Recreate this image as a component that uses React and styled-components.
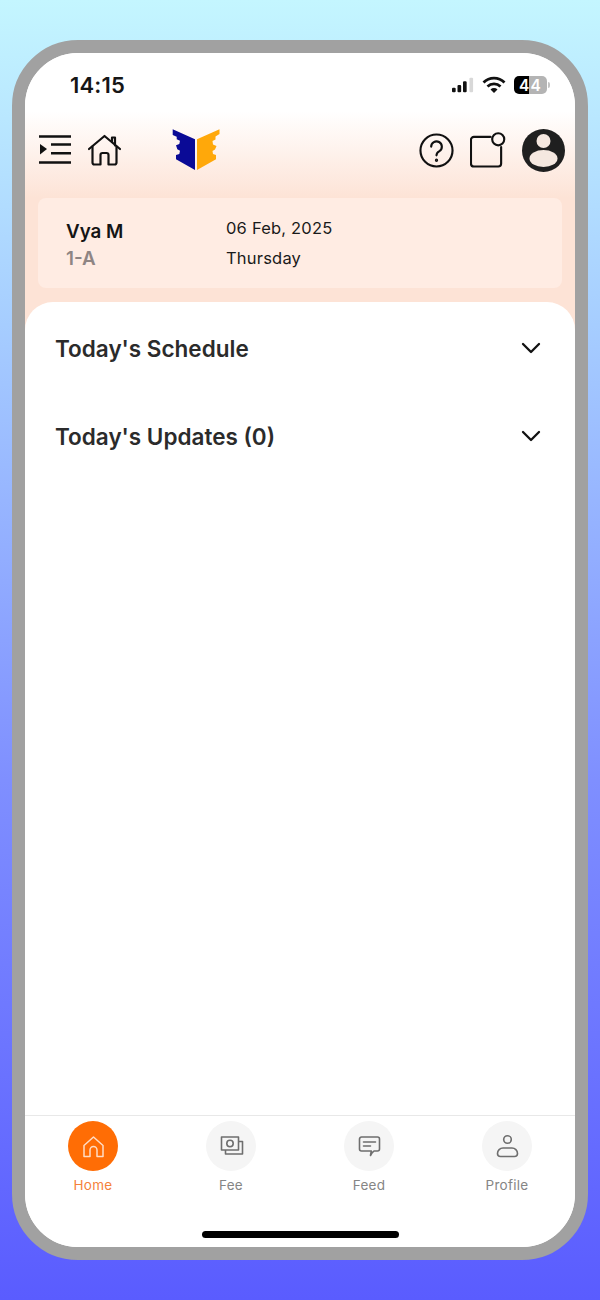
import React from 'react';
import styled, { createGlobalStyle } from 'styled-components';

const GlobalStyle = createGlobalStyle`
  html, body {
    margin: 0;
    padding: 0;
  }
  body {
    font-family: Inter, "Liberation Sans", sans-serif;
  }
`;

// Fond de la page et cadre du telephone
const Page = styled.div`
  box-sizing: border-box;
  width: 600px;
  height: 1300px;
  padding: 40px 12px;
  background: linear-gradient(180deg, #c4f6ff 0%, #a6cdff 25%, #7f8fff 60%, #5a5cff 100%);
`;

const Phone = styled.div`
  box-sizing: border-box;
  height: 1220px;
  border: 13px solid #a1a1a1;
  border-radius: 66px;
  background: #fff;
  overflow: hidden;
  display: flex;
  flex-direction: column;
`;

const Top = styled.div`
  background: linear-gradient(180deg, #ffffff 0, #ffffff 58px, #fde3d6 145px, #fde3d6 100%);
  height: 277px;
  flex-shrink: 0;
  display: flex;
  flex-direction: column;
`;

const StatusBar = styled.div`
  height: 62px;
  flex-shrink: 0;
  display: flex;
  align-items: center;
  padding: 2px 25px 0 45px;
  box-sizing: border-box;
`;

const Clock = styled.span`
  font-size: 22px;
  font-weight: 600;
  color: #161616;
  letter-spacing: 0.2px;
  margin-right: auto;
`;

const StatusIcons = styled.div`
  display: flex;
  align-items: center;
  gap: 8px;
`;

const Battery = styled.div`
  width: 33px;
  height: 18px;
  border-radius: 5px;
  background: linear-gradient(90deg, #000 0 44%, #b4b4b4 44% 100%);
  color: #fff;
  font-size: 15.5px;
  font-weight: 600;
  letter-spacing: 1.2px;
  display: flex;
  align-items: center;
  justify-content: center;
  margin-right: 3px;
  position: relative;

  &::after {
    content: '';
    position: absolute;
    right: -3px;
    top: 6px;
    width: 2px;
    height: 6px;
    border-radius: 0 2px 2px 0;
    background: #c4c4c4;
  }
`;

const Header = styled.header`
  height: 70px;
  flex-shrink: 0;
  display: flex;
  align-items: center;
  padding: 0 10px 0 14px;
`;

const LeftIcons = styled.div`
  display: flex;
  align-items: center;
  gap: 17px;
`;

const Logo = styled.svg`
  margin-left: 51px;
  margin-top: -2px;
`;

const RightIcons = styled.div`
  margin-left: auto;
  display: flex;
  align-items: center;
  gap: 16px;
`;

const InfoCard = styled.div`
  margin: 13px 13px 0;
  height: 90px;
  box-sizing: border-box;
  border-radius: 8px;
  background: #ffece3;
  display: flex;
  padding: 19px 0 0 28px;
`;

const NameCol = styled.div`
  width: 160px;
  padding-top: 2px;
  display: flex;
  flex-direction: column;
  gap: 3px;
`;

const Name = styled.div`
  font-size: 18.8px;
  line-height: 26px;
  font-weight: 600;
  color: #141414;
`;

const ClassName = styled.div`
  font-size: 18.8px;
  line-height: 22px;
  font-weight: 600;
  color: #8f8583;
`;

const DateCol = styled.div`
  display: flex;
  flex-direction: column;
  gap: 8px;
`;

const DateLine = styled.div`
  font-size: 16.5px;
  line-height: 22px;
  color: #1a1a1a;
  letter-spacing: 0.2px;
`;

const Sheet = styled.main`
  flex: 1;
  margin-top: -28px;
  background: #fff;
  border-radius: 28px 28px 0 0;
  padding: 26px 34px 0 30px;
  position: relative;
`;

const AccordionRow = styled.div`
  height: 40px;
  margin-bottom: 48px;
  display: flex;
  align-items: center;
  justify-content: space-between;
`;

const AccordionTitle = styled.h2`
  margin: 0;
  font-size: 22.5px;
  font-weight: 600;
  color: #2b2b2b;
`;

const BottomNav = styled.nav`
  height: 132px;
  flex-shrink: 0;
  box-sizing: border-box;
  border-top: 1px solid #e8e8e8;
  background: #fff;
  display: flex;
  flex-direction: column;
  align-items: center;
`;

const Tabs = styled.div`
  width: 100%;
  display: flex;
  justify-content: space-between;
  padding: 5px 18px 0;
  box-sizing: border-box;
`;

const Tab = styled.div`
  width: 100px;
  display: flex;
  flex-direction: column;
  align-items: center;
  gap: 5px;
`;

const TabCircle = styled.div`
  width: 50px;
  height: 50px;
  border-radius: 50%;
  background: ${(props) => (props.$active ? '#ff6d05' : '#f5f5f5')};
  display: flex;
  align-items: center;
  justify-content: center;
`;

const TabLabel = styled.span`
  font-size: 13.5px;
  line-height: 18px;
  letter-spacing: 0.3px;
  color: ${(props) => (props.$active ? '#f5813a' : '#858585')};
`;

const HomeBar = styled.div`
  width: 197px;
  height: 7px;
  border-radius: 4px;
  background: #000;
  margin-top: 37px;
`;

const Chevron = () => (
  <svg width="20" height="12" viewBox="0 0 20 12" fill="none" stroke="#111" strokeWidth="2.3" strokeLinecap="round" strokeLinejoin="round">
    <path d="M2 2l8 8 8-8" />
  </svg>
);

const tabs = [
  {
    label: 'Home',
    active: true,
    icon: (
      <g stroke="#ffdcc4" strokeWidth="1.5" strokeLinejoin="round" strokeLinecap="round" fill="none">
        <path d="M3 11.5L12.5 3 22 11.5V22.500h-6v-6.500a3.400 3.400 0 0 0-7 0V22.500H3z" />
      </g>
    ),
  },
  {
    label: 'Fee',
    icon: (
      <g stroke="#6e6e6e" strokeWidth="1.6" strokeLinejoin="round" fill="none">
        <rect x="2.500" y="3" width="17" height="13" />
        <circle cx="11" cy="9.500" r="3.200" />
        <path d="M19.500 7.500h4V20h-17v-4" />
      </g>
    ),
  },
  {
    label: 'Feed',
    icon: (
      <g stroke="#6e6e6e" strokeWidth="1.6" strokeLinejoin="round" strokeLinecap="round" fill="none">
        <path d="M4.500 3h16a2 2 0 0 1 2 2v10a2 2 0 0 1-2 2h-3.500l-2 1.800-1.500 2.700 .8-4.500H4.500a2 2 0 0 1-2-2V5a2 2 0 0 1 2-2z" />
        <path d="M6.500 8h12M6.500 12h7" />
      </g>
    ),
  },
  {
    label: 'Profile',
    icon: (
      <g stroke="#6e6e6e" strokeWidth="1.6" fill="none">
        <circle cx="12.500" cy="5.500" r="3.800" />
        <path d="M2.500 19.500a5.500 5.500 0 0 1 5.500-5.500h9a5.500 5.500 0 0 1 5.500 5.500v0a3 3 0 0 1-3 3h-14a3 3 0 0 1-3-3z" />
      </g>
    ),
  },
];

const App = () => {
  return (
    <Page>
      <GlobalStyle />
      <Phone>
        <Top>
          <StatusBar>
            <Clock>14:15</Clock>
            <StatusIcons>
              <svg width="22" height="18" viewBox="0 0 24 18">
                <rect x="0" y="12" width="4" height="5" rx="1.200" fill="#111" />
                <rect x="6" y="9" width="4" height="8" rx="1.200" fill="#111" />
                <rect x="12" y="5" width="4" height="12" rx="1.200" fill="#111" />
                <rect x="19" y="1" width="4" height="16" rx="1.200" fill="#d8d8d8" />
              </svg>
              <svg width="24" height="18" viewBox="0 0 24 18" fill="none" stroke="#111" strokeWidth="2.800">
                <path d="M1.500 6.500a15 15 0 0 1 21 0" />
                <path d="M5.500 10.500a9.500 9.500 0 0 1 13 0" />
                <path d="M12 17l-3.500-3.500a5 5 0 0 1 7 0z" fill="#111" stroke="none" />
              </svg>
              <Battery>44</Battery>
            </StatusIcons>
          </StatusBar>
          <Header>
            <LeftIcons>
              <svg width="32" height="30" viewBox="0 0 32 30" fill="none" stroke="#111" strokeWidth="2.600">
                <path d="M0 1.500h32M12 9.500h20M12 18.300h20M0 27.500h32" />
                <path d="M1 9l7 5-7 5.500z" fill="#111" stroke="none" />
              </svg>
              <svg width="33" height="33" viewBox="0 0 33 33" fill="none" stroke="#111" strokeWidth="2.200" strokeLinejoin="round" strokeLinecap="round">
                <path d="M1 15L16.500 2 32 15" />
                <path d="M24 8V3.500h3V11.500" />
                <path d="M4.500 12.500V28.500a2 2 0 0 0 2 2h6v-9.500a2 2 0 0 1 2-2h4a2 2 0 0 1 2 2v9.500h6a2 2 0 0 0 2-2V12.500" />
              </svg>
            </LeftIcons>
            <Logo width="48" height="42" viewBox="0 0 48 42">
              <path d="M0.700 1.300L23 11.300V42L4 31.300V27L7.300 26 8 22.700 5.300 21.300 4 17.300 7.300 16 8 12.700 4.700 11.300V8.700L0.700 7z" fill="#0a0a96" />
              <path d="M25 11.300L47.500 1.300V6L43.500 8.500V11.500L40.500 13 41 16.500L44.500 18 43 21.500 40.500 23 41 26 44 27V31.300L25 42z" fill="#ffa80a" />
            </Logo>
            <RightIcons>
              <svg width="35" height="35" viewBox="0 0 36 36" fill="none" stroke="#111" strokeWidth="2.200" strokeLinecap="round" strokeLinejoin="round">
                <circle cx="18" cy="18" r="16.500" />
                <path d="M12.500 14a5.500 5.500 0 1 1 8.500 4.700c-2 1.200-3 2-3 4.300" />
                <circle cx="18" cy="28" r="0.600" fill="#111" />
              </svg>
              <svg width="36" height="36" viewBox="0 0 37 36" fill="none" stroke="#111" strokeWidth="2.200" strokeLinecap="round">
                <path d="M21 4.500H4a3 3 0 0 0-3 3V32a3 3 0 0 0 3 3h25a3 3 0 0 0 3-3V15" />
                <circle cx="29" cy="7" r="6.200" />
              </svg>
              <svg width="43" height="43" viewBox="0 0 43 43">
                <defs>
                  <clipPath id="avatar-clip">
                    <circle cx="21.500" cy="21.500" r="21.500" />
                  </clipPath>
                </defs>
                <circle cx="21.500" cy="21.500" r="21.500" fill="#1f1f1f" />
                <circle cx="21.500" cy="12" r="7" fill="#f5e8e0" />
                <ellipse cx="21.500" cy="29.500" rx="14" ry="8.500" fill="#f5e8e0" clipPath="url(#avatar-clip)" />
              </svg>
            </RightIcons>
          </Header>
          <InfoCard>
            <NameCol>
              <Name>Vya M</Name>
              <ClassName>1-A</ClassName>
            </NameCol>
            <DateCol>
              <DateLine>06 Feb, 2025</DateLine>
              <DateLine>Thursday</DateLine>
            </DateCol>
          </InfoCard>
        </Top>
        <Sheet>
          <AccordionRow>
            <AccordionTitle>Today's Schedule</AccordionTitle>
            <Chevron />
          </AccordionRow>
          <AccordionRow>
            <AccordionTitle>Today's Updates (0)</AccordionTitle>
            <Chevron />
          </AccordionRow>
        </Sheet>
        <BottomNav>
          <Tabs>
            {tabs.map((tab) => (
              <Tab key={tab.label}>
                <TabCircle $active={tab.active}>
                  <svg width="25" height="25" viewBox="0 0 25 25">{tab.icon}</svg>
                </TabCircle>
                <TabLabel $active={tab.active}>{tab.label}</TabLabel>
              </Tab>
            ))}
          </Tabs>
          <HomeBar />
        </BottomNav>
      </Phone>
    </Page>
  );
};

export default App;
